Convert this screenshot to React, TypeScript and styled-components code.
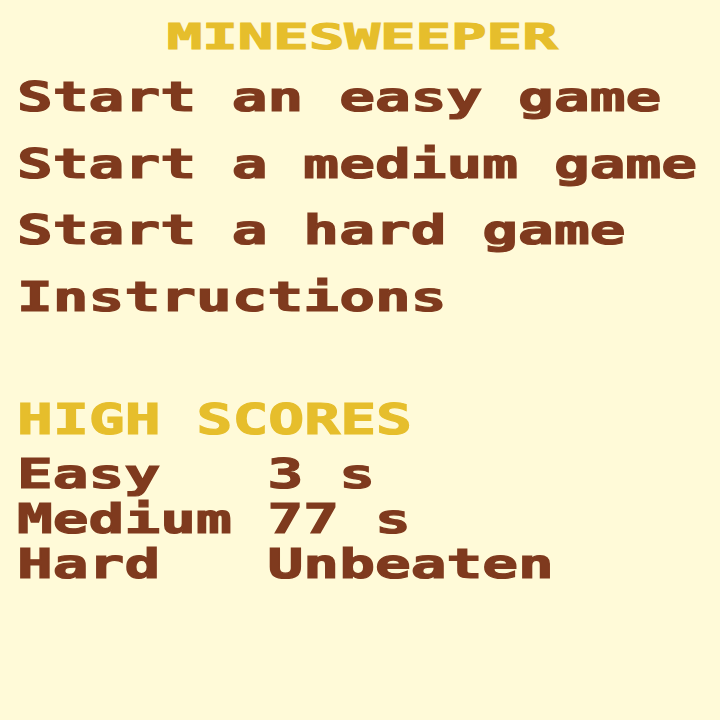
import React from "react";
import styled, { createGlobalStyle } from "styled-components";

const Global = createGlobalStyle`
  html, body {
    margin: 0;
    padding: 0;
    background: #fffad8;
  }
  body {
    font-family: "DejaVu Sans Mono", "Liberation Mono", monospace;
  }
`;

const Screen = styled.div`
  width: 720px;
  height: 720px;
  box-sizing: border-box;
  padding: 12px 0 0 17px;
  background: #fffad8;
  display: flex;
  flex-direction: column;
  overflow: hidden;
`;

const TitleBar = styled.div`
  height: 50px;
  margin-left: -17px;
  display: flex;
  justify-content: center;
  align-items: center;
  padding-left: 4px;
`;

const Stretch = styled.span<{ $scale: number; $origin?: string }>`
  display: inline-block;
  white-space: pre;
  -webkit-text-stroke: 1.2px currentColor;
  transform: scaleX(${(p) => p.$scale});
  transform-origin: ${(p) => p.$origin ?? "left center"};
`;

const Title = styled(Stretch)`
  font-family: "DejaVu Sans Mono", monospace;
  font-weight: bold;
  font-size: 36px;
  line-height: 50px;
  color: #e6be2c;
`;

const Menu = styled.div`
  margin-top: 2px;
  display: flex;
  flex-direction: column;
`;

const MenuItem = styled.div`
  height: 66.7px;
  font-weight: bold;
  font-size: 41px;
  line-height: 66.7px;
  color: #7f3a1e;
`;

const Heading = styled.div`
  margin-top: 66px;
  height: 45px;
  font-weight: bold;
  font-size: 42px;
  line-height: 45px;
  color: #e6be2c;
`;

const Scores = styled.div`
  margin-top: 10px;
  display: flex;
  flex-direction: column;
`;

const ScoreRow = styled.div`
  height: 45px;
  font-weight: bold;
  font-size: 41px;
  line-height: 45px;
  color: #7f3a1e;
`;

const menu = [
  "Start an easy game",
  "Start a medium game",
  "Start a hard game",
  "Instructions",
];

const scores: [string, string][] = [
  ["Easy", "3 s"],
  ["Medium", "77 s"],
  ["Hard", "Unbeaten"],
];

export default function App() {
  return (
    <>
      <Global />
      <Screen>
        <TitleBar>
          <Title $scale={1.64} $origin="center center">
            MINESWEEPER
          </Title>
        </TitleBar>
        <Menu>
          {menu.map((m) => (
            <MenuItem key={m}>
              <Stretch $scale={1.45}>{m}</Stretch>
            </MenuItem>
          ))}
        </Menu>
        <Heading>
          <Stretch $scale={1.42}>HIGH SCORES</Stretch>
        </Heading>
        <Scores>
          {scores.map(([k, v]) => (
            <ScoreRow key={k}>
              <Stretch $scale={1.45}>{k.padEnd(7, " ") + v}</Stretch>
            </ScoreRow>
          ))}
        </Scores>
      </Screen>
    </>
  );
}
